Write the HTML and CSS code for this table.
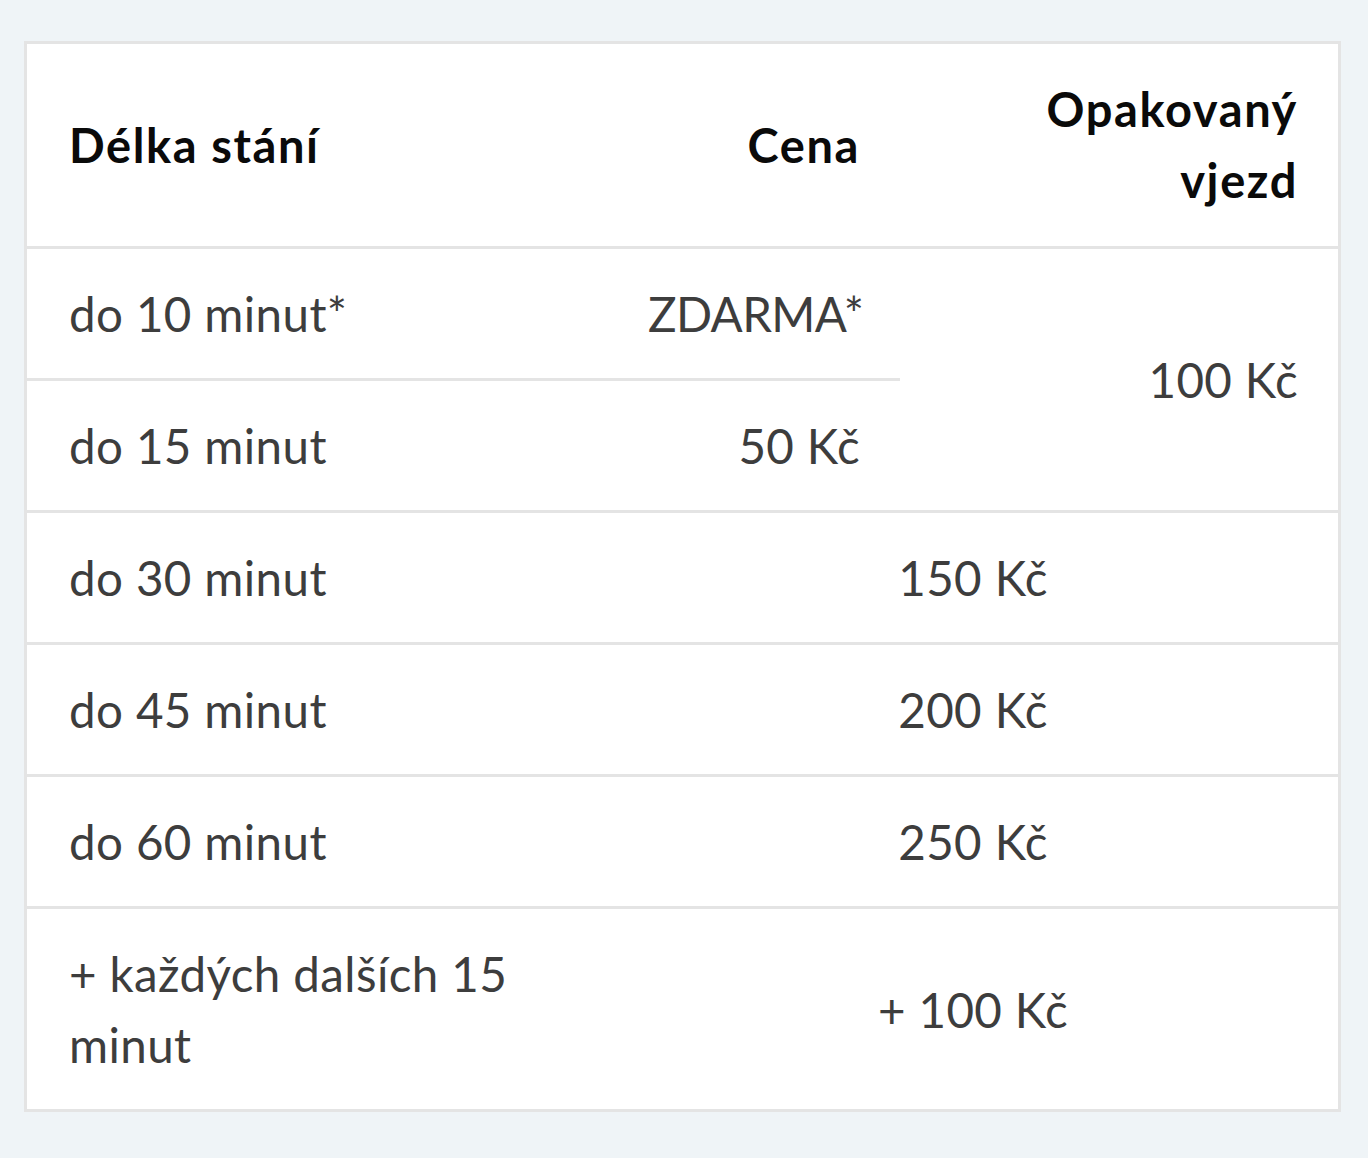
FILE: index.html
```html
<!DOCTYPE html>
<html lang="cs">
<head>
<meta charset="utf-8">
<title>Ceník parkování</title>
<link rel="stylesheet" href="styles.css">
</head>
<body>
<table class="price-table">
  <colgroup>
    <col class="col-len">
    <col class="col-price">
    <col class="col-repeat">
  </colgroup>
  <thead>
    <tr>
      <th class="left">Délka stání</th>
      <th class="right">Cena</th>
      <th class="right"><span class="wrap">Opakovaný vjezd</span></th>
    </tr>
  </thead>
  <tbody>
    <tr>
      <td class="left">do 10 minut*</td>
      <td class="right tight">ZDARMA*</td>
      <td class="right" rowspan="2">100 Kč</td>
    </tr>
    <tr>
      <td class="left">do 15 minut</td>
      <td class="right">50 Kč</td>
    </tr>
    <tr>
      <td class="left">do 30 minut</td>
      <td class="center" colspan="2">150 Kč</td>
    </tr>
    <tr>
      <td class="left">do 45 minut</td>
      <td class="center" colspan="2">200 Kč</td>
    </tr>
    <tr>
      <td class="left">do 60 minut</td>
      <td class="center" colspan="2">250 Kč</td>
    </tr>
    <tr class="last-row">
      <td class="left"><span class="wrap-long">+ každých dalších 15 minut</span></td>
      <td class="center" colspan="2">+ 100 Kč</td>
    </tr>
  </tbody>
</table>
</body>
</html>
```

FILE: styles.css
```css
html, body {
  margin: 0;
  padding: 0;
  background: #eff4f7;
}

body {
  padding: 41px 27px 47px 24px;
  font-family: "Lato", "Open Sans", sans-serif;
}

.price-table {
  width: 1317px;
  table-layout: fixed;
  border-collapse: separate;
  border-spacing: 0;
  border: 3px solid #e4e4e4;
  background: #ffffff;
}

.col-len { width: 579px; }
.col-price { width: 294px; }
.col-repeat { width: 438px; }

.price-table th,
.price-table td {
  font-size: 47.5px;
  line-height: 71px;
  padding: 29px 40px 29px 42px;
  border-bottom: 3px solid #e4e4e4;
  vertical-align: middle;
}

.price-table th {
  padding-top: 30px;
  padding-bottom: 30px;
  font-size: 47px;
  font-weight: 700;
  letter-spacing: 1.6px;
  color: #0a0a0a;
}

.price-table td {
  font-weight: 400;
  letter-spacing: 0.4px;
  color: #3d3d3d;
}

.price-table td.tight {
  letter-spacing: -0.6px;
  padding-right: 48px;
}

.price-table .last-row td {
  border-bottom: none;
}

.wrap {
  display: inline-block;
  max-width: 280px;
}

.wrap-long {
  display: inline-block;
  max-width: 470px;
}

.left { text-align: left; }
.right { text-align: right; }
.center { text-align: center; }
```
